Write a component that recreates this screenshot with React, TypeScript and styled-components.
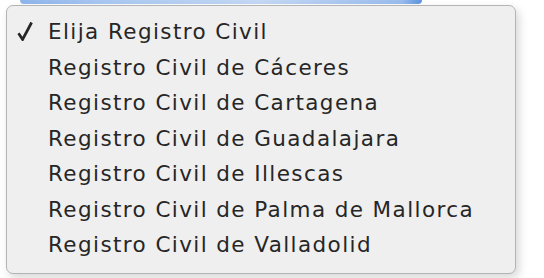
import React from "react";
import styled, { createGlobalStyle } from "styled-components";

const Global = createGlobalStyle`
  html, body { margin: 0; padding: 0; background: #ffffff; }
  body { width: 544px; height: 278px; overflow: hidden; font-family: "DejaVu Sans", "Liberation Sans", Arial, sans-serif; }
`;

const Stage = styled.div`
  position: relative;
  width: 544px;
  height: 278px;
  background: #ffffff;
`;

const SelectField = styled.div`
  margin-left: 20px;
  width: 402px;
  height: 4px;
  border-radius: 0 0 4px 4px;
  background: linear-gradient(90deg, #8fb6ec 0%, #a9c8f1 20%, #c4d9f5 60%, #9bbdee 95%, #5b93e3 100%);
`;

const Menu = styled.ul`
  position: absolute;
  left: 6px;
  top: 5px;
  width: 510px;
  height: 269px;
  box-sizing: border-box;
  margin: 0;
  padding: 8px 0 0 0;
  list-style: none;
  background: #efefef;
  border: 1px solid #b4b4b4;
  border-radius: 7px;
  box-shadow: 3px 4px 10px rgba(0, 0, 0, 0.16);
`;

const Item = styled.li`
  display: flex;
  align-items: center;
  height: 35.5px;
  padding-left: 41px;
  position: relative;
  font-size: 21.5px;
  letter-spacing: 1.4px;
  color: #262626;
  white-space: nowrap;
`;

const Check = styled.svg`
  position: absolute;
  left: 10px;
  top: 7px;
`;

const options = [
  "Elija Registro Civil",
  "Registro Civil de Cáceres",
  "Registro Civil de Cartagena",
  "Registro Civil de Guadalajara",
  "Registro Civil de Illescas",
  "Registro Civil de Palma de Mallorca",
  "Registro Civil de Valladolid",
];

export default function App() {
  return (
    <Stage>
      <Global />
      <SelectField />
      <Menu>
        {options.map((o, i) => (
          <Item key={o}>
            {i === 0 && (
              <Check width="16" height="20" viewBox="0 0 16 20">
                <path d="M1.5 12.2 L5.6 18.5 L14.6 1.5" fill="none" stroke="#262626" strokeWidth="2.7" strokeLinecap="butt" strokeLinejoin="miter" />
              </Check>
            )}
            {o}
          </Item>
        ))}
      </Menu>
    </Stage>
  );
}
